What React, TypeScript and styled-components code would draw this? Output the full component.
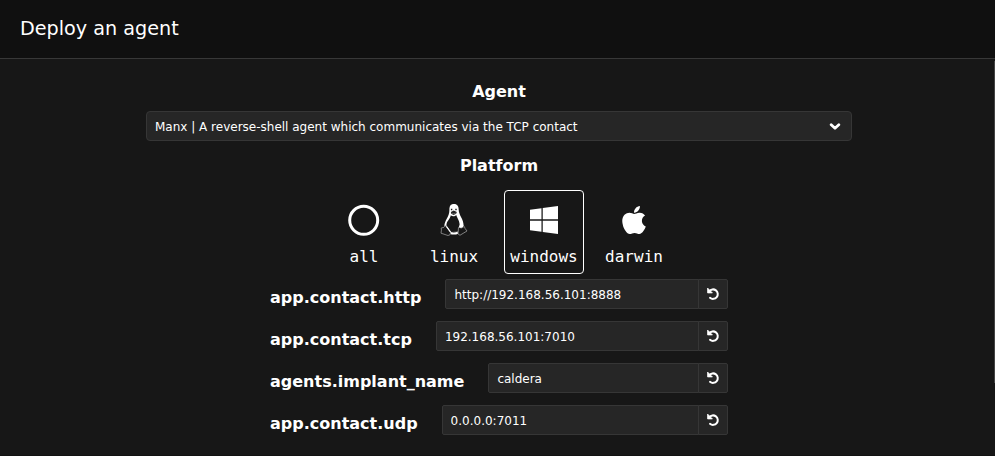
import React from "react";
import styled, { createGlobalStyle } from "styled-components";
import { FaWindows, FaApple } from "react-icons/fa";

const Global = createGlobalStyle`
  * { box-sizing: border-box; }
  body { margin: 0; background: #171717; color: #fff; font: 16px/24px "DejaVu Sans", sans-serif; overflow: hidden; }
`;
const Modal = styled.div`
  height: 456px;
  display: flex;
  flex-direction: column;
  background: #171717;
  border-bottom: 1px solid #121212;
`;
const Header = styled.header`
  height: 59px;
  flex: none;
  padding: 0 20px;
  display: flex;
  align-items: center;
  background: #101010;
  border-bottom: 1px solid #383838;
  font-size: 19.2px;
`;
const Content = styled.div`
  flex: 1;
  display: flex;
  min-height: 0;
`;
const Body = styled.main`
  flex: 1;
  display: flex;
  flex-direction: column;
  align-items: center;
  padding: 21px 0 0 4px;
`;
const ScrollThumb = styled.div`
  width: 1px;
  height: 322px;
  margin-top: 2px;
  background: #444;
`;
const Heading = styled.h2`
  margin: 0;
  height: 24px;
  font-size: 16px;
  line-height: 24px;
  font-weight: 700;
`;
const Select = styled.button`
  width: 706px;
  height: 30px;
  margin: 7px 0 13px;
  padding: 1px 10px 0 8px;
  display: flex;
  align-items: center;
  justify-content: space-between;
  background: #262626;
  border: 1px solid #363636;
  border-radius: 4px;
  color: #fff;
  font: 12px/16px "DejaVu Sans", sans-serif;
`;
const Platforms = styled.div`
  display: flex;
  gap: 10px;
  margin: 12px 0 5px;
`;
const Platform = styled.button<{ $active?: boolean }>`
  width: 80px;
  height: 84px;
  padding: 12px 0 0;
  display: flex;
  flex-direction: column;
  align-items: center;
  gap: 8px;
  background: none;
  border: 1px solid ${(p) => (p.$active ? "#fff" : "transparent")};
  border-radius: 4px;
  color: #fff;
  font: 16px/24px "DejaVu Sans Mono", monospace;
  svg { flex: none; display: block; }
`;
const IconSlot = styled.span`
  height: 34px;
  display: flex;
  align-items: center;
  justify-content: center;
`;
const Fields = styled.div`
  width: 458px;
  display: flex;
  flex-direction: column;
  gap: 12px;
`;
const Field = styled.div`
  height: 30px;
  display: flex;
  gap: 24px;
`;
const Label = styled.label`
  padding-top: 7px;
  font-weight: 700;
`;
const InputGroup = styled.div`
  flex: 1;
  min-width: 0;
  display: flex;
`;
const Input = styled.input`
  flex: 1;
  min-width: 0;
  height: 30px;
  padding: 2px 8px 0;
  background: #262626;
  border: 1px solid #363636;
  border-radius: 2px 0 0 2px;
  color: #fff;
  outline: none;
  font: 12px "DejaVu Sans", sans-serif;
`;
const Reset = styled.button`
  width: 30px;
  height: 30px;
  margin-left: -1px;
  padding: 0;
  display: flex;
  align-items: center;
  justify-content: center;
  background: #262626;
  border: 1px solid #363636;
  border-radius: 0 2px 2px 0;
  color: #fff;
`;

const Circle = () => (
  <svg width="32" height="32" viewBox="0 0 32 32">
    <circle cx="15.7" cy="16.3" r="14" fill="none" stroke="#fff" strokeWidth="3" />
  </svg>
);

const Tux = () => (
  <svg width="28" height="34" viewBox="0 0 28 34">
    <path d="M9.4 7C9.4 3 10.5 1 14 1S18.7 3.4 18.7 7C18.7 12 23.6 16 23.6 22.5L20 29L8 29L4.4 23C4.4 17.5 9.4 14 9.4 7Z" fill="#fff" />
    <path d="M10.8 12.2C12 13.6 15 13.6 16.3 12C17 15 20 18.5 19.6 22L18.6 28.7L10.4 29C9.4 26.5 7.8 24.5 6.4 22.5C6.4 18 10.3 16 10.8 12.2Z" fill="#171717" />
    <path d="M11.6 7.3V5.8M16 7.3V5.8" fill="none" stroke="#171717" strokeWidth="1.4" />
    <path d="M10.9 9L13.7 7.6L16.8 9L16.2 10.8L13.6 12L11.2 10.8Z" fill="#222" />
    <path d="M11.6 10.2Q13.8 11.4 16 10.1" fill="none" stroke="#999" strokeWidth=".5" />
    <path d="M10.5 30Q14 31.2 18 29.7" fill="none" stroke="#fff" strokeWidth="2.1" />
    <path d="M5.5 22.7L10.6 29.5Q10.5 32.8 8 32.5L1 30.2Q1.8 26.5 1.2 25Q4.5 24.8 5.5 22.7Z" fill="#171717" stroke="#999" strokeWidth=".8" />
    <path d="M18.5 24.3L18 31Q20 33.5 22 31L27 28Q24.7 25.5 24.3 23.5Q21.5 26 18.5 24.3Z" fill="#171717" stroke="#999" strokeWidth=".8" />
    <path d="M19 23Q21.5 20.8 23.6 22.6Q22.8 25.2 19.6 24.4Z" fill="#fff" />
    <path d="M6.5 23.5L10.8 29.3" stroke="#fff" strokeWidth="1.1" />
  </svg>
);

const Chevron = () => (
  <svg width="12" height="8" viewBox="0 0 12 8">
    <path d="M2.2 1.8L6 5.2L9.8 1.8" fill="none" stroke="#fff" strokeWidth="2.8" strokeLinecap="round" strokeLinejoin="round" />
  </svg>
);

const UndoIcon = () => (
  <svg width="14" height="14" viewBox="0 0 14 14">
    <path d="M3.2 4.3A4.75 4.75 0 1 1 4 10.8" fill="none" stroke="#fff" strokeWidth="2" strokeLinecap="round" />
    <path d="M1.6 1.1V5.9H6.4Z" fill="#fff" stroke="#fff" strokeWidth=".8" strokeLinejoin="round" />
  </svg>
);

const platforms = [
  { name: "all", icon: <Circle /> },
  { name: "linux", icon: <Tux /> },
  { name: "windows", icon: <FaWindows size={32} />, active: true },
  { name: "darwin", icon: <FaApple size={32} /> },
];
const fields = [
  ["app.contact.http", "http://192.168.56.101:8888"],
  ["app.contact.tcp", "192.168.56.101:7010"],
  ["agents.implant_name", "caldera"],
  ["app.contact.udp", "0.0.0.0:7011"],
];

export default function App() {
  return (
    <Modal>
      <Global />
      <Header>Deploy an agent</Header>
      <Content>
        <Body>
          <Heading>Agent</Heading>
          <Select>
            Manx | A reverse-shell agent which communicates via the TCP contact
            <Chevron />
          </Select>
          <Heading>Platform</Heading>
          <Platforms>
            {platforms.map((p) => (
              <Platform key={p.name} $active={p.active}>
                <IconSlot>{p.icon}</IconSlot>
                {p.name}
              </Platform>
            ))}
          </Platforms>
          <Fields>
            {fields.map(([name, value]) => (
              <Field key={name}>
                <Label htmlFor={name}>{name}</Label>
                <InputGroup>
                  <Input id={name} defaultValue={value} />
                  <Reset aria-label={`Reset ${name}`}>
                    <UndoIcon />
                  </Reset>
                </InputGroup>
              </Field>
            ))}
          </Fields>
        </Body>
        <ScrollThumb />
      </Content>
    </Modal>
  );
}
